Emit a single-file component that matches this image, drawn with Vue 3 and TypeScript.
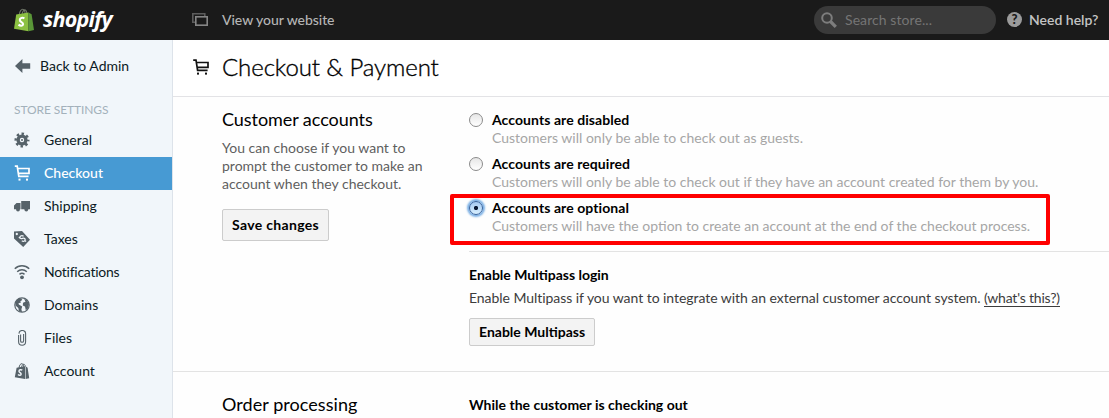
<script setup lang="ts">
import { ref } from 'vue'

interface NavItem { id: string; label: string; active?: boolean }
interface AccountOption { id: string; title: string; detail: string }

const navItems: NavItem[] = [
  { id: 'general', label: 'General' },
  { id: 'checkout', label: 'Checkout', active: true },
  { id: 'shipping', label: 'Shipping' },
  { id: 'taxes', label: 'Taxes' },
  { id: 'notifications', label: 'Notifications' },
  { id: 'domains', label: 'Domains' },
  { id: 'files', label: 'Files' },
  { id: 'account', label: 'Account' },
]

const options: AccountOption[] = [
  { id: 'disabled', title: 'Accounts are disabled', detail: 'Customers will only be able to check out as guests.' },
  { id: 'required', title: 'Accounts are required', detail: 'Customers will only be able to check out if they have an account created for them by you.' },
  { id: 'optional', title: 'Accounts are optional', detail: 'Customers will have the option to create an account at the end of the checkout process.' },
]

const selected = ref('optional')
</script>

<template>
  <div class="app">
    <header class="topbar">
      <div class="brand">
        <svg class="bag" viewBox="0 0 20 24" width="20" height="24">
          <path d="M5.2 7C5.6 3.2 7.3 1 9 1.2c1.3.1 2 2 2.200 4.800M8 6.500c.5-3.200 1.900-5 3.300-4.600 1.200.4 1.500 2 1.600 3.600" fill="none" stroke="#6f7668" stroke-width="1.100" />
          <path d="M2.200 6.500 14.500 4.600 14.500 23.200 0 20.800Z" fill="#8cc142" />
          <path d="M14.500 4.600 17.600 6.300 20 21.900 14.500 23.200Z" fill="#5a9638" />
          <path d="M10.400 10.300c-1.800-1-4.600-.5-4.600 1.600 0 2.300 3.500 2 3.300 4.300-.2 1.900-2.800 1.900-4.600.5" fill="none" stroke="#fff" stroke-width="2.100" />
        </svg>
        <span class="wordmark">shopify</span>
      </div>
      <a class="view-site">
        <svg viewBox="0 0 16 14" width="16" height="14">
          <path d="M3 9.300H.8V.8h12V3" fill="none" stroke="#5c5c5c" stroke-width="1.600" />
          <rect x="3.800" y="3.800" width="11.400" height="8.400" fill="none" stroke="#858585" stroke-width="1.600" />
        </svg>
        <span>View your website</span>
      </a>
      <div class="search">
        <svg viewBox="0 0 16 16" width="16" height="16">
          <circle cx="6" cy="6" r="4.800" fill="none" stroke="#7d7d7d" stroke-width="2" />
          <path d="M9.500 9.500 14.800 14.800" stroke="#7d7d7d" stroke-width="3.200" />
        </svg>
        <span>Search store...</span>
      </div>
      <a class="help">
        <span class="help-mark">?</span>
        <span class="help-label">Need help?</span>
      </a>
    </header>

    <div class="body">
      <aside class="sidebar">
        <a class="back">
          <svg viewBox="0 0 16 14" width="16" height="14">
            <path d="M0 7 7.400 0V4.200H15.200V9.800H7.400V14Z" fill="#566269" />
          </svg>
          <span>Back to Admin</span>
        </a>
        <h2 class="group">STORE SETTINGS</h2>
        <nav>
          <a v-for="item in navItems" :key="item.id" class="nav-item" :class="[item.id, { active: item.active }]">
            <svg class="nav-icon" viewBox="0 0 16 16" width="16" height="16">
              <g v-if="item.id === 'general'">
                <circle cx="8" cy="8" r="6.300" fill="none" stroke="currentColor" stroke-width="2.400" stroke-dasharray="2.470 2.478" stroke-dashoffset="1.230" />
                <circle cx="8" cy="8" r="3.900" fill="none" stroke="currentColor" stroke-width="3.400" />
                <circle cx="8" cy="8" r="1" fill="currentColor" />
              </g>
              <g v-else-if="item.id === 'checkout'">
                <path d="M.8 1.200H3.200L4.800 11.400H14.600M3.500 3.500H15V8.300H4.500" fill="none" stroke="currentColor" stroke-width="1.700" />
                <rect x="4.500" y="13.600" width="2" height="2" fill="currentColor" />
                <rect x="12" y="13.600" width="2" height="2" fill="currentColor" />
              </g>
              <g v-else-if="item.id === 'shipping'" fill="currentColor">
                <path d="M7.200 3H16V11.300H7.200ZM0 7.500 2.500 5H6.500V11.300H0Z" />
                <circle cx="4" cy="11.500" r="1.900" /><circle cx="12.300" cy="11.500" r="1.900" />
              </g>
              <g v-else-if="item.id === 'taxes'">
                <path fill-rule="evenodd" d="M0 .5 8 0 16 8.800 9.200 16 0 7.500ZM2.800 1.800a1.200 1.200 0 1 0 .01 0Z" fill="currentColor" />
                <path d="M9.600 5.300C7.500 3.500 5.200 5.600 6.300 7.100c1.200 1.500 3-.9 4.300.4 1.600 1.700-.6 4-2.800 2.300M4.800 6.300l1.500 1M10.600 9.600l1.500 1" fill="none" stroke="#f1f6fa" stroke-width="1.200" />
              </g>
              <g v-else-if="item.id === 'notifications'" fill="none" stroke="currentColor" stroke-width="1.500">
                <path d="M.8 4.700C4.800.6 11.200.6 15.200 4.700M3.200 7.700c2.700-2.600 6.900-2.600 9.600 0M5.500 10.400c1.500-1.300 3.500-1.300 5 0" />
                <circle cx="8" cy="13.300" r="1.900" fill="currentColor" stroke="none" />
              </g>
              <g v-else-if="item.id === 'domains'">
                <circle cx="8" cy="8" r="7.200" fill="none" stroke="currentColor" stroke-width="1.200" />
                <path d="M1.500 5 4.200 1.800 7.300 1.500 8.300 3 6.300 4.300 7 5.500 4.500 6.300 4.800 7.600 8.200 9.500 7.400 12.300 8 15 5 14.500 4.300 11 1.500 8.500ZM10 1.500 13 3.200 15 7 14 11.500 11.800 13.200 11 9.600 8.800 8.400 9 5.800 11.500 4.800Z" fill="currentColor" />
              </g>
              <path v-else-if="item.id === 'files'" d="M6.600 4.500V10.700a1.500 1.500 0 0 0 3 .2V4M4.600 5V11.700a3.500 3.500 0 0 0 7 0V4a3.300 3.300 0 0 0-6.600-.4" fill="none" stroke="currentColor" stroke-width="1.100" />
              <g v-else>
                <path d="M5 5C5.400 1.800 6.700.5 8 .7c1.200.2 1.600 1.500 1.700 3.300M7.600 4C8.200 1.700 9.400.9 10.300 1.400c.7.400 1 1.300 1 2.300" fill="none" stroke="currentColor" />
                <path d="M2.600 4.700 11 3.300V16L.8 14.300ZM11.600 3.300 13.600 4.700 15.200 15.200 11.600 16Z" fill="currentColor" />
                <path d="M8.300 7.200C7 6.300 5 6.800 5 8.200c0 1.500 2.300 1.500 2.100 3-.1 1.300-1.900 1.300-3.100.3" fill="none" stroke="#f1f6fa" stroke-width="1.500" />
              </g>
            </svg>
            <span>{{ item.label }}</span>
          </a>
        </nav>
      </aside>

      <main class="main">
        <div class="page-head">
          <svg viewBox="0 0 16 16" width="16" height="16">
            <path d="M.2 1.200H3L4.600 11.400H14.600M3.200 3.500H15V8.300H4.400" fill="none" stroke="#111" stroke-width="1.700" />
            <rect x="4" y="13.600" width="2" height="2" fill="#111" />
            <rect x="12" y="13.600" width="2" height="2" fill="#111" />
          </svg>
          <h1>Checkout &amp; Payment</h1>
        </div>

        <section class="section">
          <div class="summary">
            <h2>Customer accounts</h2>
            <p>You can choose if you want to<br />prompt the customer to make an<br />account when they checkout.</p>
            <button class="btn save" type="button">Save changes</button>
          </div>
          <div class="content">
            <div class="options">
              <label v-for="option in options" :key="option.id" class="option" :class="{ highlighted: option.id === selected }" @click="selected = option.id">
                <span class="radio" :class="{ checked: option.id === selected }"></span>
                <span class="option-text">
                  <strong>{{ option.title }}</strong>
                  <small>{{ option.detail }}</small>
                </span>
              </label>
            </div>
            <div class="multipass">
              <h3>Enable Multipass login</h3>
              <p>Enable Multipass if you want to integrate with an external customer account system. <a>(what's this?)</a></p>
              <button class="btn" type="button">Enable Multipass</button>
            </div>
          </div>
        </section>

        <section class="section next">
          <div class="summary"><h2>Order processing</h2></div>
          <div class="content"><h3>While the customer is checking out</h3></div>
        </section>
      </main>
    </div>
  </div>
</template>

<style>
body { margin: 0; overflow: hidden; background: #fefefe; }
</style>

<style scoped>
*, *::before { box-sizing: border-box; }
.app { width: 1109px; height: 418px; overflow: hidden; display: flex; flex-direction: column; font-family: Lato, "Open Sans", sans-serif; font-size: 14px; color: #000; background: #fefefe; }
h1, h2, h3, p { margin: 0; font-weight: 400; }
.topbar { height: 40px; flex: none; display: flex; align-items: center; padding-bottom: 1px; background: #1a1a1a; color: #b5b5b5; }
.brand { width: 192px; padding-left: 14px; display: flex; align-items: center; }
.bag { margin-right: 9px; }
.wordmark { font: italic 700 21.5px/30px "Open Sans", sans-serif; letter-spacing: -0.75px; color: #fff; margin-top: -1px; }
.view-site { display: flex; align-items: center; gap: 14px; flex: 1; font-weight: 500; letter-spacing: -0.05px; }
.search { width: 182px; height: 28px; margin-top: 1px; padding: 0 0 1px 7px; border-radius: 14px; background: #3a3a3a; color: #757575; display: flex; align-items: center; gap: 8px; letter-spacing: 0.08px; }
.help { width: 113px; display: flex; align-items: center; padding-left: 11px; gap: 7px; color: #c4c4c4; font-weight: 600; }
.help-mark { width: 15px; height: 15px; border-radius: 50%; background: #9b9b9b; color: #1a1a1a; font: 900 13px/15px Lato, sans-serif; text-align: center; }
.body { flex: 1; display: flex; min-height: 0; }
.sidebar { width: 173px; border-right: 1px solid #dde3ea; background: #f1f6fa; flex: none; color: #0c1a24; }
.back { height: 52px; display: flex; align-items: center; padding: 0 0 1px 15px; gap: 9px; }
.group { height: 32px; padding: 10px 0 0 14px; font-size: 12px; line-height: 16px; letter-spacing: -0.1px; color: #a3b1bb; }
.nav-item { height: 33px; display: flex; align-items: center; padding: 0 0 2px 14px; gap: 14px; }
.nav-icon { color: #566269; }
.notifications { letter-spacing: -0.25px; }
.active { background: #479ad3; color: #fff; width: 172px; font-weight: 500; }
.active .nav-icon { color: #fff; }
.main { flex: 1; min-width: 0; }
.page-head { height: 57px; border-bottom: 1px solid #e3e3e6; background: #fff; display: flex; align-items: center; padding: 0 0 2px 20px; gap: 13px; }
h1 { font-size: 24px; line-height: 30px; font-weight: 300; letter-spacing: -0.1px; -webkit-text-stroke: 0.35px #000; }
.section { display: flex; height: 275px; padding: 13px 0 0 49px; border-bottom: 1px solid #e3e3e3; }
.summary { width: 247px; flex: none; }
.summary h2 { font-size: 18px; line-height: 18px; letter-spacing: -0.06px; }
.summary p { margin-top: 11px; line-height: 18px; color: #5f5f5f; }
.btn { display: block; height: 28px; padding: 0 9px; border: 1px solid #ccc; border-radius: 2px; background: #f3f3f3; color: #000; font: 700 14px/20px Lato, sans-serif; white-space: nowrap; }
.save { margin-top: 16px; height: 32px; width: 107px; letter-spacing: 0.33px; }
.content { flex: 1; }
.options { height: 142px; border-bottom: 1px solid #e3e3e3; }
.option { position: relative; display: flex; height: 44px; }
.radio { width: 14px; height: 14px; margin-top: 3px; border: 1px solid #8b8b8b; border-radius: 50%; background: linear-gradient(#e6e6e6, #fff); }
.radio.checked { border-color: #35619d; background: radial-gradient(circle, #0a1935 0 1.800px, transparent 2.400px), linear-gradient(#a4c9f2, #d9f0ff); box-shadow: 0 0 2px 2px #78aee4; }
.option-text { margin-left: 9px; white-space: nowrap; }
strong, small { display: block; font-size: 14px; line-height: 18px; }
strong { font-weight: 700; padding-top: 1px; letter-spacing: 0.07px; }
small { color: #a6a6a6; }
.highlighted::before { content: ""; position: absolute; left: -19px; top: -4px; width: 600px; height: 51px; border: 4px solid #f00; border-radius: 2px; }
h3 { font-size: 14px; font-weight: 700; line-height: 18px; }
.multipass { padding-top: 14px; color: #3c3c3c; }
.multipass h3 { color: #000; }
.multipass p { margin: 5px 0 11px; line-height: 18px; white-space: nowrap; letter-spacing: -0.05px; }
.multipass a { border-bottom: 1px solid #3c3c3c; letter-spacing: -0.2px; }
.next { padding-top: 24px; }
.next h2 { margin-top: -1px; letter-spacing: 0.06px; }
</style>
